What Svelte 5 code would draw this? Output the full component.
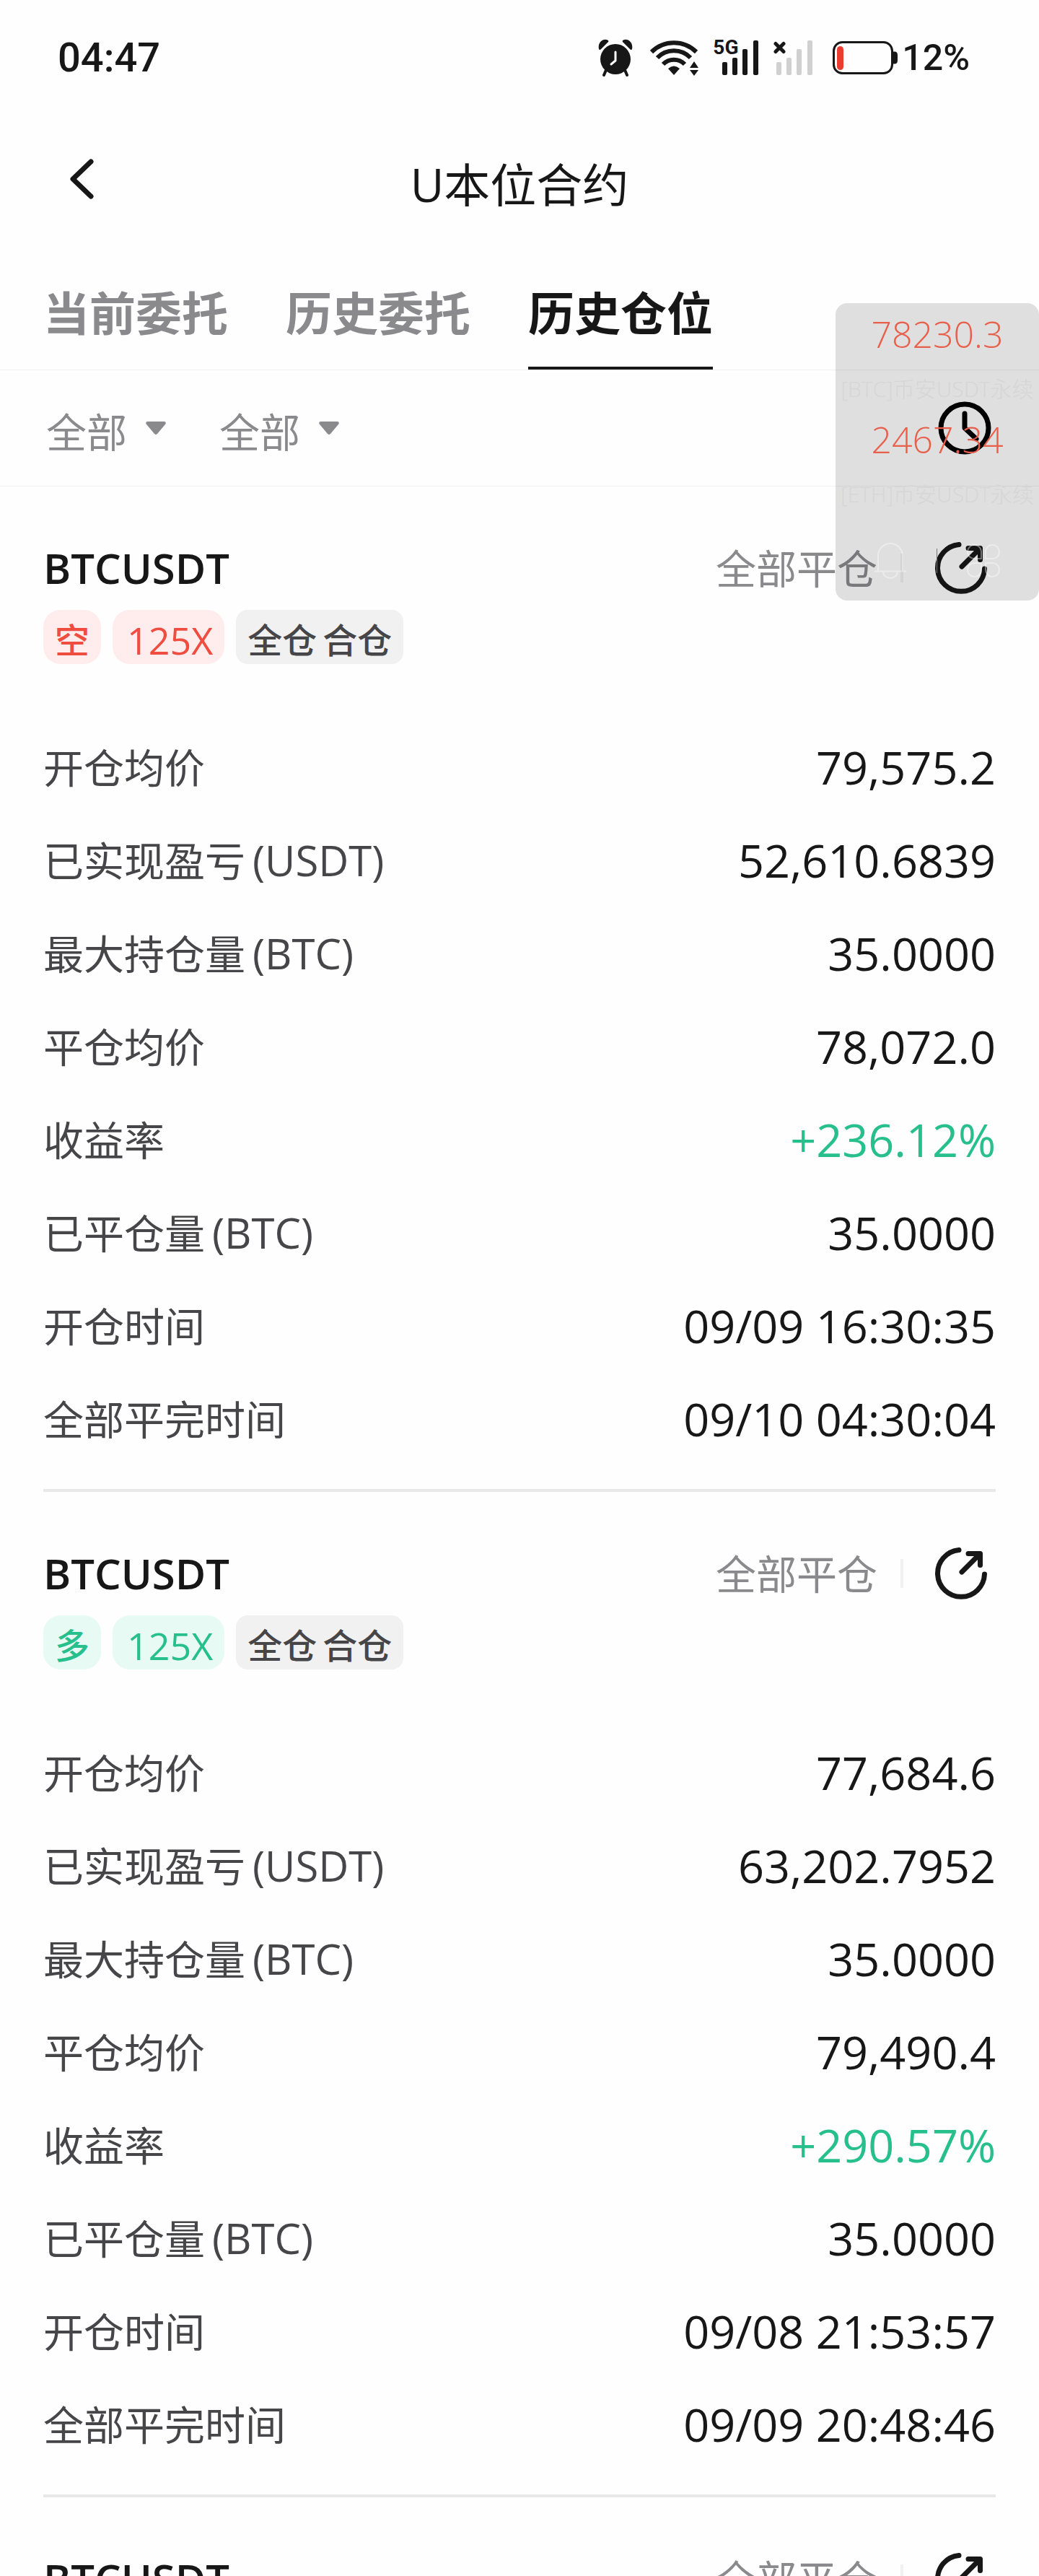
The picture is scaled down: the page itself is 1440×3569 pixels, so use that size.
<script lang="ts">
  type Row = { label: string; unit?: string; value: string; up?: boolean };
  type Position = { symbol: string; side?: "long" | "short"; rows: Row[] };

  const tabs = ["当前委托", "历史委托", "历史仓位"];
  let activeTab = $state("历史仓位");
  let filters = $state(["全部", "全部"]);

  const tickers = [
    { price: "78230.3", name: "[BTC]币安USDT永续" },
    { price: "2467.34", name: "[ETH]币安USDT永续" },
  ];

  const bars = [
    { x: 0, y: 30 },
    { x: 14, y: 24 },
    { x: 28, y: 12 },
    { x: 43, y: 0 },
  ];

  const positions: Position[] = [
    {
      symbol: "BTCUSDT",
      side: "short",
      rows: [
        { label: "开仓均价", value: "79,575.2" },
        { label: "已实现盈亏", unit: "(USDT)", value: "52,610.6839" },
        { label: "最大持仓量", unit: "(BTC)", value: "35.0000" },
        { label: "平仓均价", value: "78,072.0" },
        { label: "收益率", value: "+236.12%", up: true },
        { label: "已平仓量", unit: "(BTC)", value: "35.0000" },
        { label: "开仓时间", value: "09/09 16:30:35" },
        { label: "全部平完时间", value: "09/10 04:30:04" },
      ],
    },
    {
      symbol: "BTCUSDT",
      side: "long",
      rows: [
        { label: "开仓均价", value: "77,684.6" },
        { label: "已实现盈亏", unit: "(USDT)", value: "63,202.7952" },
        { label: "最大持仓量", unit: "(BTC)", value: "35.0000" },
        { label: "平仓均价", value: "79,490.4" },
        { label: "收益率", value: "+290.57%", up: true },
        { label: "已平仓量", unit: "(BTC)", value: "35.0000" },
        { label: "开仓时间", value: "09/08 21:53:57" },
        { label: "全部平完时间", value: "09/09 20:48:46" },
      ],
    },
    { symbol: "BTCUSDT", rows: [] },
  ];
</script>

<div class="page">
  <div class="status-bar">
    <span class="time">04:47</span>
    <div class="status-icons">
      <svg class="alarm" width="48" height="52" viewBox="0 0 48 52">
        <circle cx="24" cy="28" r="21" fill="#171717" />
        <path d="M1 14C-1 5 7-2 14 2Q15 4 13 5L4 14Q2 16 1 14ZM47 14C49 5 41-2 34 2Q33 4 35 5L44 14Q46 16 47 14Z" fill="#171717" />
        <path d="M11 43 8 50M37 43l3 7" stroke="#171717" stroke-width="4" stroke-linecap="round" />
        <path d="M24 18v12l-6 5" fill="none" stroke="#fff" stroke-width="3" stroke-linecap="round" stroke-linejoin="round" />
      </svg>
      <svg class="wifi" width="68" height="52" viewBox="0 0 68 52">
        <g fill="none" stroke="#171717" stroke-width="6">
          <path d="M2 18A44 44 0 0 1 64 18" />
          <path d="M10 26A32 32 0 0 1 56 26" />
          <path d="M18 35A21 21 0 0 1 48 35" />
        </g>
        <path d="M25 41Q33 34 41 41L33 50Z" fill="#171717" />
        <path d="M61 31l6 9H55ZM55 43h12l-6 8Z" fill="#171717" />
      </svg>
      <div class="signal">
        <span class="network">5G</span>
        <svg width="51" height="50" viewBox="0 0 51 50">
          {#each bars as bar}
            <rect x={bar.x} y={bar.y + 1} width="7" height={48 - bar.y} rx="2" fill="#171717" />
          {/each}
        </svg>
      </div>
      <svg class="no-signal" width="56" height="50" viewBox="0 0 56 50">
        {#each bars as bar}
          <rect x={bar.x + 4} y={bar.y + 1} width="7" height={48 - bar.y} rx="2" fill="#d0d0d0" />
        {/each}
        <path d="M3 5.500l11 11M14 5.500l-11 11" stroke="#171717" stroke-width="5" stroke-linecap="round" />
      </svg>
      <svg class="battery" width="90" height="46" viewBox="0 0 90 46">
        <rect x="1.500" y="1.500" width="81" height="43" rx="12" fill="none" stroke="#171717" stroke-width="3" />
        <path d="M83 14.500h3q4 0 4 5v7q0 5-4 5h-3Z" fill="#171717" />
        <rect x="6" y="7" width="9" height="33" rx="4.500" fill="#ea3d2f" />
      </svg>
      <span class="percent">12%</span>
    </div>
  </div>

  <header class="title-bar">
    <button class="back" aria-label="返回">
      <svg width="34" height="72" viewBox="0 0 34 72">
        <path d="M30 4 5 28 30 52" fill="none" stroke="#171717" stroke-width="7" stroke-linecap="round" stroke-linejoin="round" />
      </svg>
    </button>
    <h1>U本位合约</h1>
  </header>

  <div class="tabs" role="tablist">
    {#each tabs as tab}
      <button role="tab" aria-selected={activeTab === tab} onclick={() => (activeTab = tab)}>{tab}</button>
    {/each}
  </div>

  <div class="filters">
    {#each filters as _, i}
      <label class="filter">
        <select bind:value={filters[i]} aria-label="筛选">
          <option value="全部">全部</option>
        </select>
        <svg width="28" height="18" viewBox="0 0 28 18">
          <path d="M2 0H26Q29 1 27 4L16 17Q14 19 12 17L1 4Q-1 1 2 0Z" fill="#8a8a8c" />
        </svg>
      </label>
    {/each}
    <button class="history" aria-label="时间">
      <svg width="74" height="74" viewBox="0 0 74 74">
        <g fill="none" stroke="#000" stroke-width="7" stroke-linecap="round" stroke-linejoin="round">
          <circle cx="37" cy="37" r="33" />
          <path d="M37 17v20l16 15" />
        </g>
      </svg>
    </button>
  </div>

  <main>
    {#each positions as position}
      <section class="position">
        <div class="position-head">
          <h2>{position.symbol}</h2>
          <span class="state">全部平仓</span>
          <span class="divider"></span>
          <button class="share" aria-label="分享">
            <svg width="72" height="72" viewBox="0 0 72 72">
              <g fill="none" stroke="#171717" stroke-width="7" stroke-linecap="round" stroke-linejoin="round">
                <path d="M33 3.500A32.500 32.500 0 1 0 68.500 37" />
                <path d="M37 34 60 11M46 8.500H62.500V24.500" />
              </g>
              <path d="M52 9h10v10Z" fill="#171717" />
            </svg>
          </button>
        </div>
        {#if position.side}
          <div class="tags {position.side}">
            <span class="tag side">{position.side === "long" ? "多" : "空"}</span>
            <span class="tag side leverage">125X</span>
            <span class="tag mode"><span>全仓</span><span>合仓</span></span>
          </div>
          <dl>
            {#each position.rows as row}
              <div class="row">
                <dt>{row.label}{#if row.unit}<span class="unit">{row.unit}</span>{/if}</dt>
                <dd class:up={row.up}>{row.value}</dd>
              </div>
            {/each}
          </dl>
        {/if}
      </section>
    {/each}
  </main>

  <!-- floating price window, sits over the page -->
  <aside class="float">
    {#each tickers as ticker}
      <div class="ticker">
        <span class="price">{ticker.price}</span>
        <span class="name">{ticker.name}</span>
      </div>
    {/each}
    <div class="float-tools">
      <svg width="44" height="50" viewBox="0 0 44 50">
        <path d="M5 39V18a17 17 0 0 1 34 0v21M0 39.500h44M12 40a10 9 0 0 0 20 0" fill="none" stroke="#fff" stroke-opacity="0.4" stroke-width="2" />
      </svg>
      <span class="float-line"></span>
      <svg width="46" height="46" viewBox="0 0 46 46">
        <path
          d="M20 20H11a9.500 9.500 0 1 1 9-9ZM26 20V11a9.500 9.500 0 1 1 9 9ZM20 26v9a9.500 9.500 0 1 1-9-9ZM26 26h9a9.500 9.500 0 1 1-9 9Z"
          fill="none"
          stroke="#fff"
          stroke-opacity="0.4"
          stroke-width="2"
        />
      </svg>
    </div>
  </aside>
</div>

<style>
  :global(body) {
    background: #fefefe;
  }

  .page {
    position: relative;
    height: 100vh;
    overflow: hidden;
    color: #171717;
    font-family: "Open Sans", "Noto Sans CJK SC", sans-serif;
    font-size: 56px;
  }

  button {
    padding: 0;
    border: 0;
    background: none;
    color: inherit;
    font: inherit;
    cursor: pointer;
  }
  svg {
    display: block;
    flex: none;
  }
  h1,
  h2,
  dl,
  dd {
    margin: 0;
  }

  .status-bar {
    display: flex;
    align-items: center;
    justify-content: space-between;
    height: 160px;
    padding: 0 96px 0 80px;
    font-family: Roboto, sans-serif;
    font-weight: 500;
  }
  .status-icons {
    display: flex;
    align-items: center;
  }
  .wifi {
    margin-left: 24px;
  }
  .signal {
    display: flex;
    position: relative;
    margin-left: 32px;
  }
  .network {
    position: absolute;
    top: -1px;
    left: -13px;
    font-family: "Liberation Sans Narrow", Roboto, sans-serif;
    font-size: 28px;
    font-weight: 700;
    line-height: 24px;
  }
  .no-signal {
    margin-left: 20px;
  }
  .battery {
    margin-left: 26px;
  }
  .percent {
    margin-left: 6px;
    font-size: 50px;
  }

  .title-bar {
    display: grid;
    grid-template-columns: 1fr auto 1fr;
    align-items: center;
    height: 192px;
    padding: 0 96px;
  }
  .title-bar h1 {
    font-size: 64px;
    font-weight: 400;
    line-height: 92px;
  }
  .back {
    justify-self: start;
  }

  .tabs {
    display: flex;
    gap: 80px;
    padding: 0 60px;
    border-bottom: 1px solid #efefef;
  }
  .tabs button {
    padding: 34px 0 26px;
    border-bottom: 4px solid transparent;
    color: #8a8a8c;
    font-size: 64px;
    font-weight: 700;
    line-height: 96px;
  }
  .tabs button[aria-selected="true"] {
    border-bottom-color: #171717;
    color: #171717;
  }

  .filters {
    display: flex;
    align-items: center;
    gap: 74px;
    height: 160px;
    padding: 0 66px 0 64px;
    border-bottom: 1px solid #f1f1f1;
  }
  .filter {
    display: grid;
    align-items: center;
    width: 166px;
  }
  .filter select,
  .filter svg {
    grid-area: 1 / 1;
  }
  .filter select {
    appearance: none;
    width: 100%;
    padding: 10px 0 0;
    border: 0;
    background: none;
    color: #8a8a8c;
    font: inherit;
    line-height: 80px;
  }
  .filter svg {
    justify-self: end;
    pointer-events: none;
  }
  .history {
    margin-left: auto;
  }

  .position {
    margin: 0 60px;
    padding: 73px 0 33px;
    border-bottom: 4px solid #e8e8e8;
  }
  .position-head {
    display: flex;
    align-items: center;
    height: 80px;
    line-height: 80px;
  }
  .position-head h2 {
    flex: 1;
    font-size: 58px;
    font-weight: 600;
  }
  .state {
    color: #8a8a8c;
  }
  .divider {
    width: 4px;
    height: 40px;
    margin: 0 44px 0 32px;
    background: #f1f1f1;
  }
  .share {
    margin-right: 12px;
  }

  .tags {
    display: flex;
    gap: 16px;
    margin: 18px 0 78px;
    font-size: 48px;
    font-weight: 500;
    line-height: 67px;
  }
  .tag {
    padding: 8px 16px 0;
    border-radius: 24px;
  }
  .leverage {
    padding: 8px 16px 0 20px;
    font-size: 52px;
  }
  .mode {
    display: flex;
    gap: 8px;
    border-radius: 16px;
    background: #f1f1f1;
    color: #464648;
  }
  .short .side {
    background: #ffecec;
    color: #ee4d40;
  }
  .long .side {
    background: #e7faf4;
    color: #27c08d;
  }

  .row {
    display: flex;
    align-items: center;
    justify-content: space-between;
    height: 129px;
    line-height: 80px;
  }
  dt {
    color: #464648;
  }
  .unit {
    margin-left: 10px;
    font-size: 58px;
  }
  dd {
    font-size: 63px;
  }
  .up {
    color: #27c08d;
  }

  .float {
    position: absolute;
    top: 420px;
    right: 0;
    width: 282px;
    height: 412px;
    border-radius: 16px;
    background: rgba(0, 0, 0, 0.12);
    font-weight: 300;
  }
  .ticker {
    display: flex;
    flex-direction: column;
    align-items: center;
    height: 146px;
  }
  .price {
    color: #e85f4b;
    font-size: 50px;
    line-height: 86px;
  }
  .name {
    color: #d6d6d6;
    font-size: 30px;
    line-height: 66px;
    white-space: nowrap;
  }
  .float-tools {
    display: flex;
    align-items: center;
    justify-content: space-between;
    margin-top: 30px;
    padding: 10px 54px;
  }
  .float-line {
    width: 1px;
    height: 34px;
    background: #77777b;
  }
</style>
